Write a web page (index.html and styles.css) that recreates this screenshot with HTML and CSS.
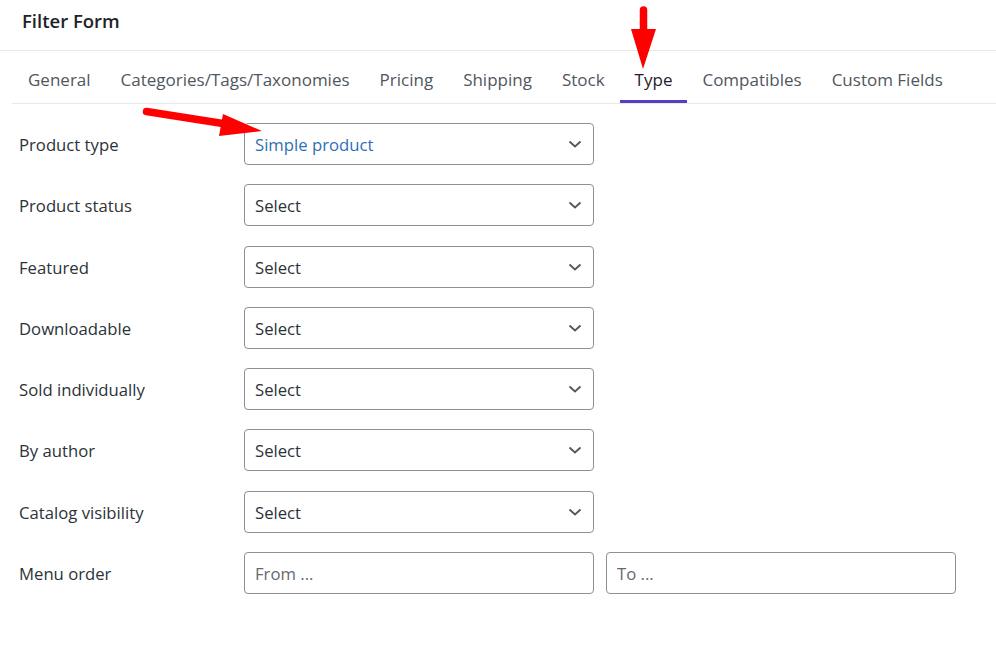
FILE: index.html
```html
<!DOCTYPE html>
<html lang="en">
<head>
<meta charset="utf-8">
<title>Filter Form</title>
<link rel="stylesheet" href="styles.css">
</head>
<body>
<div class="page">
  <header class="header"><h1 class="title">Filter Form</h1></header>
  <nav class="tabs">
    <a class="tab">General</a>
    <a class="tab">Categories/Tags/Taxonomies</a>
    <a class="tab">Pricing</a>
    <a class="tab">Shipping</a>
    <a class="tab">Stock</a>
    <a class="tab active">Type</a>
    <a class="tab">Compatibles</a>
    <a class="tab">Custom Fields</a>
  </nav>
  <form class="form">
    <div class="row">
      <label class="label">Product type</label>
      <div class="select"><span class="value selected">Simple product</span><svg class="chev" width="14" height="8" viewBox="0 0 14 8"><path d="M1.5 1.5 L7 6.5 L12.5 1.5" fill="none" stroke="#50575e" stroke-width="1.8"/></svg></div>
    </div>
    <div class="row">
      <label class="label">Product status</label>
      <div class="select"><span class="value">Select</span><svg class="chev" width="14" height="8" viewBox="0 0 14 8"><path d="M1.5 1.5 L7 6.5 L12.5 1.5" fill="none" stroke="#50575e" stroke-width="1.8"/></svg></div>
    </div>
    <div class="row">
      <label class="label">Featured</label>
      <div class="select"><span class="value">Select</span><svg class="chev" width="14" height="8" viewBox="0 0 14 8"><path d="M1.5 1.5 L7 6.5 L12.5 1.5" fill="none" stroke="#50575e" stroke-width="1.8"/></svg></div>
    </div>
    <div class="row">
      <label class="label">Downloadable</label>
      <div class="select"><span class="value">Select</span><svg class="chev" width="14" height="8" viewBox="0 0 14 8"><path d="M1.5 1.5 L7 6.5 L12.5 1.5" fill="none" stroke="#50575e" stroke-width="1.8"/></svg></div>
    </div>
    <div class="row">
      <label class="label">Sold individually</label>
      <div class="select"><span class="value">Select</span><svg class="chev" width="14" height="8" viewBox="0 0 14 8"><path d="M1.5 1.5 L7 6.5 L12.5 1.5" fill="none" stroke="#50575e" stroke-width="1.8"/></svg></div>
    </div>
    <div class="row">
      <label class="label">By author</label>
      <div class="select"><span class="value">Select</span><svg class="chev" width="14" height="8" viewBox="0 0 14 8"><path d="M1.5 1.5 L7 6.5 L12.5 1.5" fill="none" stroke="#50575e" stroke-width="1.8"/></svg></div>
    </div>
    <div class="row">
      <label class="label">Catalog visibility</label>
      <div class="select"><span class="value">Select</span><svg class="chev" width="14" height="8" viewBox="0 0 14 8"><path d="M1.5 1.5 L7 6.5 L12.5 1.5" fill="none" stroke="#50575e" stroke-width="1.8"/></svg></div>
    </div>
    <div class="row">
      <label class="label">Menu order</label>
      <div class="range">
        <input class="input" type="text" placeholder="From ...">
        <input class="input" type="text" placeholder="To ...">
      </div>
    </div>
  </form>
  <svg class="arrows" width="996" height="648" viewBox="0 0 996 648">
    <line x1="643.5" y1="10" x2="643.5" y2="32" stroke="#ff0000" stroke-width="7.5" stroke-linecap="round"/>
    <polygon points="631,29 656,29 643,69" fill="#ff0000"/>
    <line x1="146.5" y1="111.5" x2="226" y2="124" stroke="#ff0000" stroke-width="7.5" stroke-linecap="round"/>
    <polygon points="223,114 219,136 262,131" fill="#ff0000"/>
  </svg>
</div>
</body>
</html>
```
FILE: styles.css
```css
* { box-sizing: border-box; }
html, body { margin: 0; padding: 0; background: #fff; }
body {
  font-family: "Open Sans", "Noto Sans", "Liberation Sans", sans-serif;
  color: #2c3338;
  width: 996px;
  height: 648px;
  overflow: hidden;
}
.page { position: relative; width: 996px; height: 648px; }
.header {
  height: 51px;
  padding: 10px 22px 0;
  border-bottom: 1px solid #e8e8e6;
}
.title {
  margin: 0;
  font-size: 18.5px;
  line-height: 22px;
  font-weight: 600;
  color: #1d2327;
}
.tabs {
  display: flex;
  margin-left: 12px;
  height: 53px;
  border-bottom: 1px solid #e8e8e8;
}
.tab {
  display: block;
  padding: 17px 15px 11px;
  font-size: 17px;
  line-height: 24px;
  color: #50575e;
  white-space: nowrap;
}
.tab:first-child { margin-left: 1px; }
.tab.active {
  color: #1d2327;
  box-shadow: inset 0 -3px 0 #5b3cc4;
}
.form {
  display: flex;
  flex-direction: column;
  gap: 19.3px;
  padding: 19px 0 0 19px;
}
.row {
  display: grid;
  grid-template-columns: 225px auto;
  align-items: center;
  height: 42px;
}
.label {
  font-size: 16.7px;
  line-height: 22px;
  padding-top: 2px;
  color: #2c3338;
}
.select {
  display: flex;
  align-items: center;
  justify-content: space-between;
  width: 350px;
  height: 42px;
  padding: 0 11px 0 10px;
  border: 1px solid #8c8f94;
  border-radius: 4px;
  background: #fff;
}
.value { font-size: 16.7px; line-height: 22px; padding-top: 2px; color: #2c3338; }
.value.selected { color: #2e6fb5; }
.chev { display: block; }
.range { display: flex; gap: 12px; }
.input {
  width: 350px;
  height: 42px;
  padding: 0 10px;
  border: 1px solid #8c8f94;
  border-radius: 4px;
  font-family: inherit;
  font-size: 16.7px;
  color: #2c3338;
  background: #fff;
  outline: none;
}
.input::placeholder { color: #646970; }
.arrows { position: absolute; left: 0; top: 0; pointer-events: none; }
```
